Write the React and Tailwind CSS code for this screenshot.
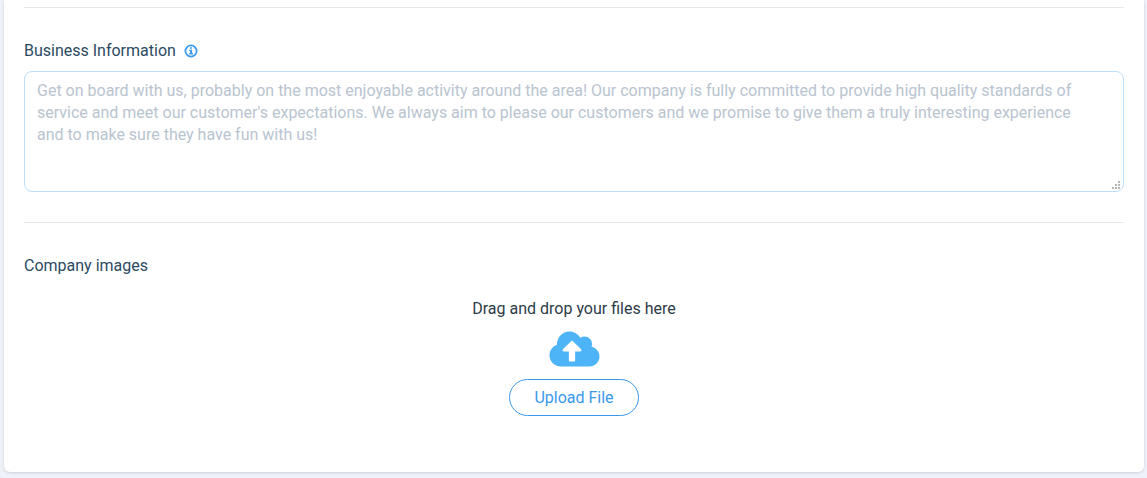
import React from 'react';
import { FaCloudUploadAlt } from 'react-icons/fa';

const SAMPLE =
  "Get on board with us, probably on the most enjoyable activity around the area! Our company is fully committed to provide high quality standards of service and meet our customer's expectations. We always aim to please our customers and we promise to give them a truly interesting experience and to make sure they have fun with us!";

function InfoIcon() {
  return (
    <svg viewBox="0 0 14 14" className="size-3.5" fill="none" aria-hidden="true">
      <circle cx="7" cy="7" r="5.6" stroke="currentColor" strokeWidth="1.8" />
      <path d="M6 3.2h2v1.6H6zM5.2 5.8H8v3.3h.9v1.3H5.2V9.1H6V7.1h-.8z" fill="currentColor" />
    </svg>
  );
}

function ResizeGrip() {
  return (
    <svg
      viewBox="0 0 8 8"
      className="pointer-events-none absolute right-1 bottom-[3px] size-2 text-[#b5b5b5]"
      fill="currentColor"
      shapeRendering="crispEdges"
      aria-hidden="true"
    >
      <path d="M6 0h2v2H6zM3 3h2v2H3zM6 3h2v2H6zM0 6h2v2H0zM3 6h2v2H3zM6 6h2v2H6z" />
    </svg>
  );
}

function BusinessInformation() {
  return (
    <section className="border-y border-[#e4e9ed] pt-[31px] pb-[30px]">
      <div className="flex items-center gap-2 pb-2">
        <label htmlFor="business-info">Business Information</label>
        <button type="button" aria-label="About business information" className="text-[#3f9bf0]">
          <InfoIcon />
        </button>
      </div>
      <div className="relative">
        <textarea
          id="business-info"
          placeholder={SAMPLE}
          className="block h-[121px] w-full resize-none rounded-lg border border-[#bde0f8] bg-white py-2 pr-7 pl-3 leading-[22px] text-[#2c4a63] outline-none placeholder:text-[#b9c4d0]"
        />
        <ResizeGrip />
      </div>
    </section>
  );
}

function CompanyImages() {
  return (
    <section className="pt-[31px] pb-14">
      <h2>Company images</h2>
      <div className="flex flex-col items-center pt-[19px]">
        <p className="text-[#2d3b48]">Drag and drop your files here</p>
        <FaCloudUploadAlt className="mt-2 h-10 w-[51px] text-[#4db5f7]" aria-hidden="true" />
        <button
          type="button"
          className="mt-[10px] h-[37px] rounded-full border border-[#3b99ec] px-6 leading-6 text-[#3b99ec]"
        >
          Upload File
        </button>
      </div>
    </section>
  );
}

export default function App() {
  return (
    <div className="min-h-screen bg-[#eff3f9] pr-[3px] pb-1.5 pl-1 font-[Roboto,sans-serif] text-base leading-6 text-[#2c4a63]">
      <main className="rounded-b-md bg-white px-5 pt-[7px] shadow-[0_1px_3px_rgba(60,70,90,0.2)]">
        <BusinessInformation />
        <CompanyImages />
      </main>
    </div>
  );
}
